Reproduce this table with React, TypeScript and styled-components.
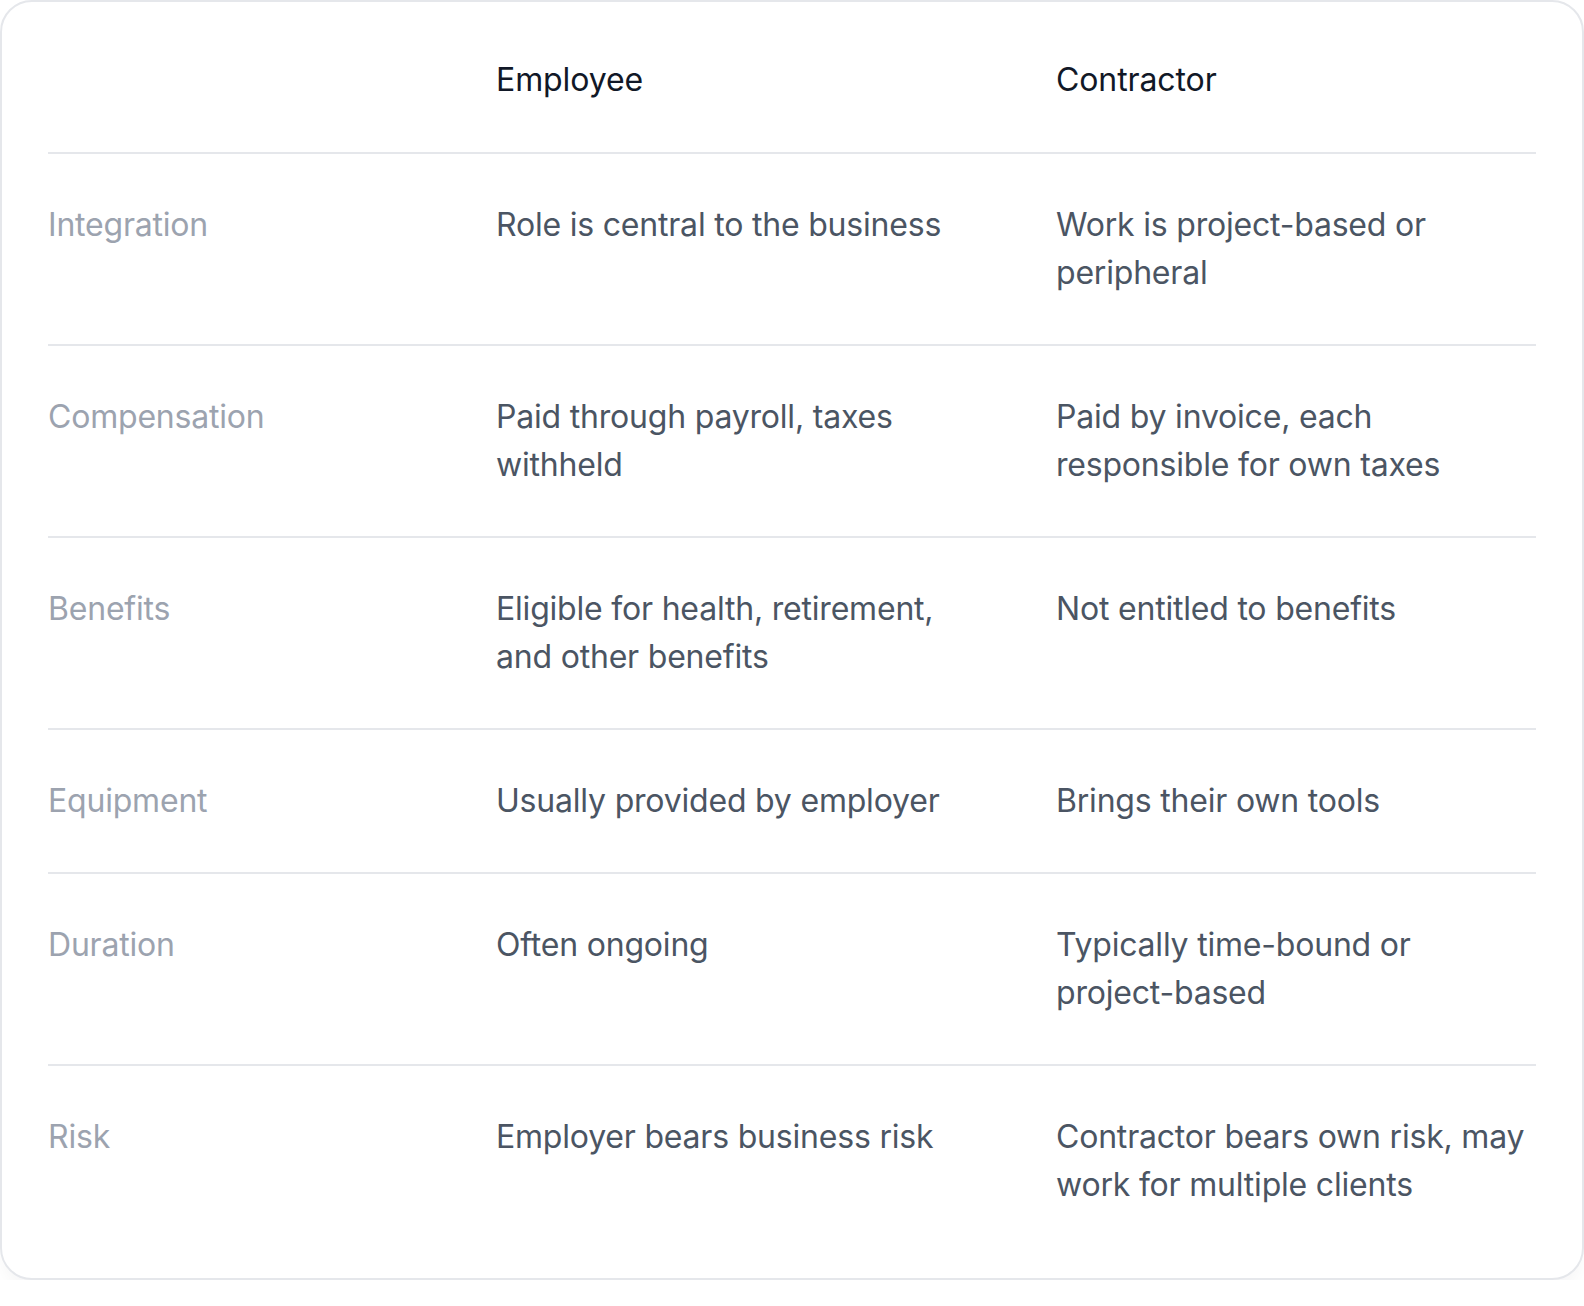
import React from "react";
import styled, { createGlobalStyle } from "styled-components";

const Global = createGlobalStyle`
  html, body { margin: 0; padding: 0; background: #ffffff; }
  body { font-family: Inter, "Noto Sans", sans-serif; -webkit-font-smoothing: antialiased; }
`;

const Card = styled.div`
  box-sizing: border-box;
  width: 1584px;
  background: #ffffff;
  border: 2px solid #e5e7eb;
  border-radius: 32px;
  padding: 0 46px 22px;
  box-shadow: 0 12px 20px -6px rgba(17, 24, 39, 0.05);
`;

const Row = styled.div<{ $header?: boolean; $last?: boolean }>`
  display: grid;
  grid-template-columns: 368px 480px 1fr;
  column-gap: 80px;
  padding: ${(p) => (p.$header ? "54px 0 48px" : "47px 0 47px")};
  border-bottom: ${(p) => (p.$last ? "none" : "2px solid #e5e7eb")};
`;

const Text = styled.div`
  font-size: 32px;
  line-height: 48px;
  font-weight: 400;
  letter-spacing: -0.2px;
`;

const HeadCell = styled(Text)`
  color: #111827;
  letter-spacing: -0.1px;
`;

const Label = styled(Text)`
  color: #9ca3af;
`;

const Cell = styled(Text)`
  color: #4b5563;
`;

const rows = [
  ["Integration", "Role is central to the business", "Work is project-based or peripheral"],
  ["Compensation", "Paid through payroll, taxes withheld", "Paid by invoice, each responsible for own taxes"],
  ["Benefits", "Eligible for health, retirement, and other benefits", "Not entitled to benefits"],
  ["Equipment", "Usually provided by employer", "Brings their own tools"],
  ["Duration", "Often ongoing", "Typically time-bound or project-based"],
  ["Risk", "Employer bears business risk", "Contractor bears own risk, may work for multiple clients"],
];

export default function App() {
  return (
    <>
      <Global />
      <Card>
        <Row $header>
          <HeadCell />
          <HeadCell>Employee</HeadCell>
          <HeadCell>Contractor</HeadCell>
        </Row>
        {rows.map((r, i) => (
          <Row key={r[0]} $last={i === rows.length - 1}>
            <Label>{r[0]}</Label>
            <Cell>{r[1]}</Cell>
            <Cell>{r[2]}</Cell>
          </Row>
        ))}
      </Card>
    </>
  );
}
